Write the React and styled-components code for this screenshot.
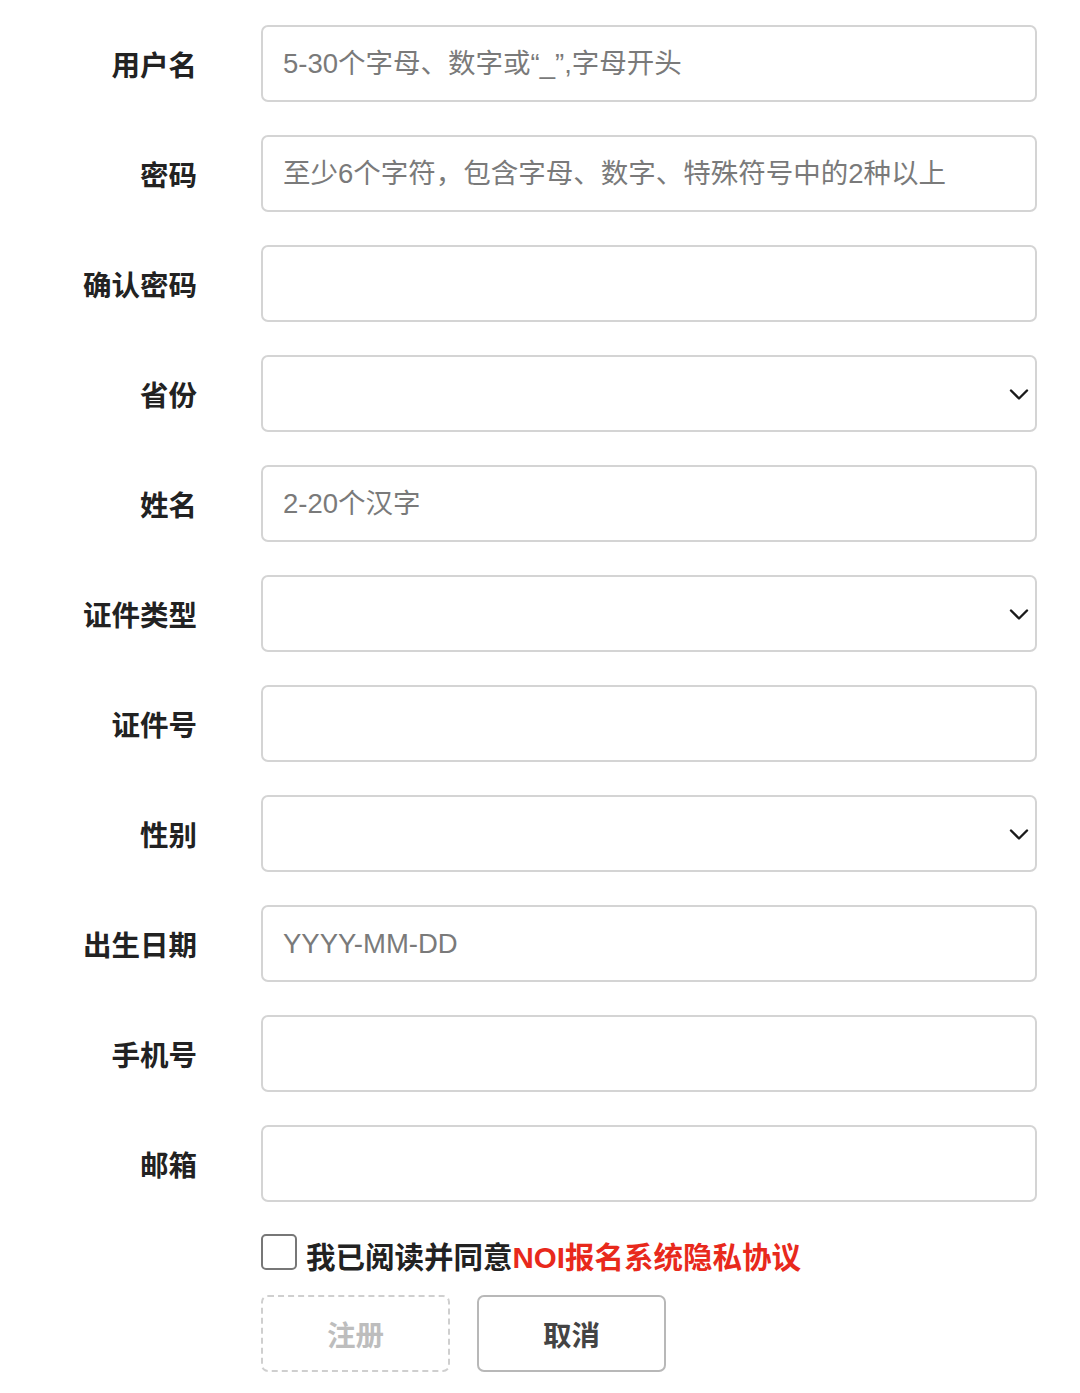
import React from 'react';
import styled, { createGlobalStyle } from 'styled-components';

const FONT = '"Liberation Sans", "Noto Sans CJK SC", sans-serif';

const GlobalStyle = createGlobalStyle`
  body {
    margin: 0;
    background: #fff;
    font-family: ${FONT};
  }
`;

const Form = styled.form`
  width: 1080px;
  box-sizing: border-box;
  padding: 25px 43px 20px 0;
  display: flex;
  flex-direction: column;
  gap: 33px;
`;

const Row = styled.div`
  display: grid;
  grid-template-columns: 197px 1fr;
  column-gap: 64px;
  align-items: center;
`;

const Label = styled.label`
  text-align: right;
  font-size: 28.5px;
  font-weight: bold;
  color: #222;
  white-space: nowrap;
`;

const TextInput = styled.input`
  box-sizing: border-box;
  width: 100%;
  height: 77px;
  border: 2px solid #d4d4d4;
  border-radius: 7px;
  padding: 0 20px;
  font-family: ${FONT};
  font-size: 27.5px;
  color: #333;
  background: #fff;
  outline: none;

  &::placeholder {
    color: #7a7a7a;
  }
`;

const SelectWrap = styled.div`
  position: relative;
`;

const Select = styled.select`
  box-sizing: border-box;
  width: 100%;
  height: 77px;
  border: 2px solid #d4d4d4;
  border-radius: 7px;
  padding: 0 20px;
  font-family: ${FONT};
  font-size: 27.5px;
  background: #fff;
  appearance: none;
  outline: none;
`;

const Chevron = styled.svg`
  position: absolute;
  right: 7px;
  top: 50%;
  transform: translateY(-50%);
  pointer-events: none;
`;

const Actions = styled.div`
  margin-left: 261px;
  margin-top: -1px;
  display: flex;
  flex-direction: column;
  gap: 19px;
`;

const Agree = styled.label`
  display: flex;
  align-items: flex-start;
  gap: 9px;
  font-size: 29.5px;
  line-height: 36px;
  font-weight: bold;
  color: #222;
`;

const Check = styled.input`
  appearance: none;
  margin: 0;
  flex: none;
  width: 36px;
  height: 36px;
  box-sizing: border-box;
  border: 2px solid #777;
  border-radius: 5px;
  background: #fff;
`;

const AgreeText = styled.span`
  margin-top: 6px;
`;

const Policy = styled.span`
  color: #e8291c;
`;

const Buttons = styled.div`
  display: flex;
  gap: 27px;
`;

const Button = styled.button`
  box-sizing: border-box;
  width: 189px;
  height: 77px;
  border-radius: 7px;
  background: #fff;
  font-family: ${FONT};
  font-size: 28.5px;
  font-weight: bold;
  border: 2px ${(p) => (p.$disabled ? 'dashed #cfcfcf' : 'solid #b8b8b8')};
  color: ${(p) => (p.$disabled ? '#bdbdbd' : '#444')};
`;

const fields = [
  { label: '用户名', placeholder: '5-30个字母、数字或“_”,字母开头' },
  { label: '密码', placeholder: '至少6个字符，包含字母、数字、特殊符号中的2种以上' },
  { label: '确认密码' },
  { label: '省份', select: true },
  { label: '姓名', placeholder: '2-20个汉字' },
  { label: '证件类型', select: true },
  { label: '证件号' },
  { label: '性别', select: true },
  { label: '出生日期', placeholder: 'YYYY-MM-DD' },
  { label: '手机号' },
  { label: '邮箱' },
];

const Field = ({ label, placeholder, select }) => (
  <Row>
    <Label>{label}</Label>
    {select ? (
      <SelectWrap>
        <Select defaultValue="">
          <option value="" />
        </Select>
        <Chevron width="22" height="22" viewBox="0 0 22 22">
          <path d="M3 7.5l8 8 8-8" fill="none" stroke="#1a1a1a" strokeWidth="2.4" strokeLinecap="round" strokeLinejoin="round" />
        </Chevron>
      </SelectWrap>
    ) : (
      <TextInput placeholder={placeholder} />
    )}
  </Row>
);

const App = () => (
  <>
    <GlobalStyle />
    <Form onSubmit={(e) => e.preventDefault()}>
      {fields.map((f) => (
        <Field key={f.label} {...f} />
      ))}
      <Actions>
        <Agree>
          <Check type="checkbox" />
          <AgreeText>
            我已阅读并同意<Policy>NOI报名系统隐私协议</Policy>
          </AgreeText>
        </Agree>
        <Buttons>
          <Button type="submit" $disabled>注册</Button>
          <Button type="button">取消</Button>
        </Buttons>
      </Actions>
    </Form>
  </>
);

export default App;
